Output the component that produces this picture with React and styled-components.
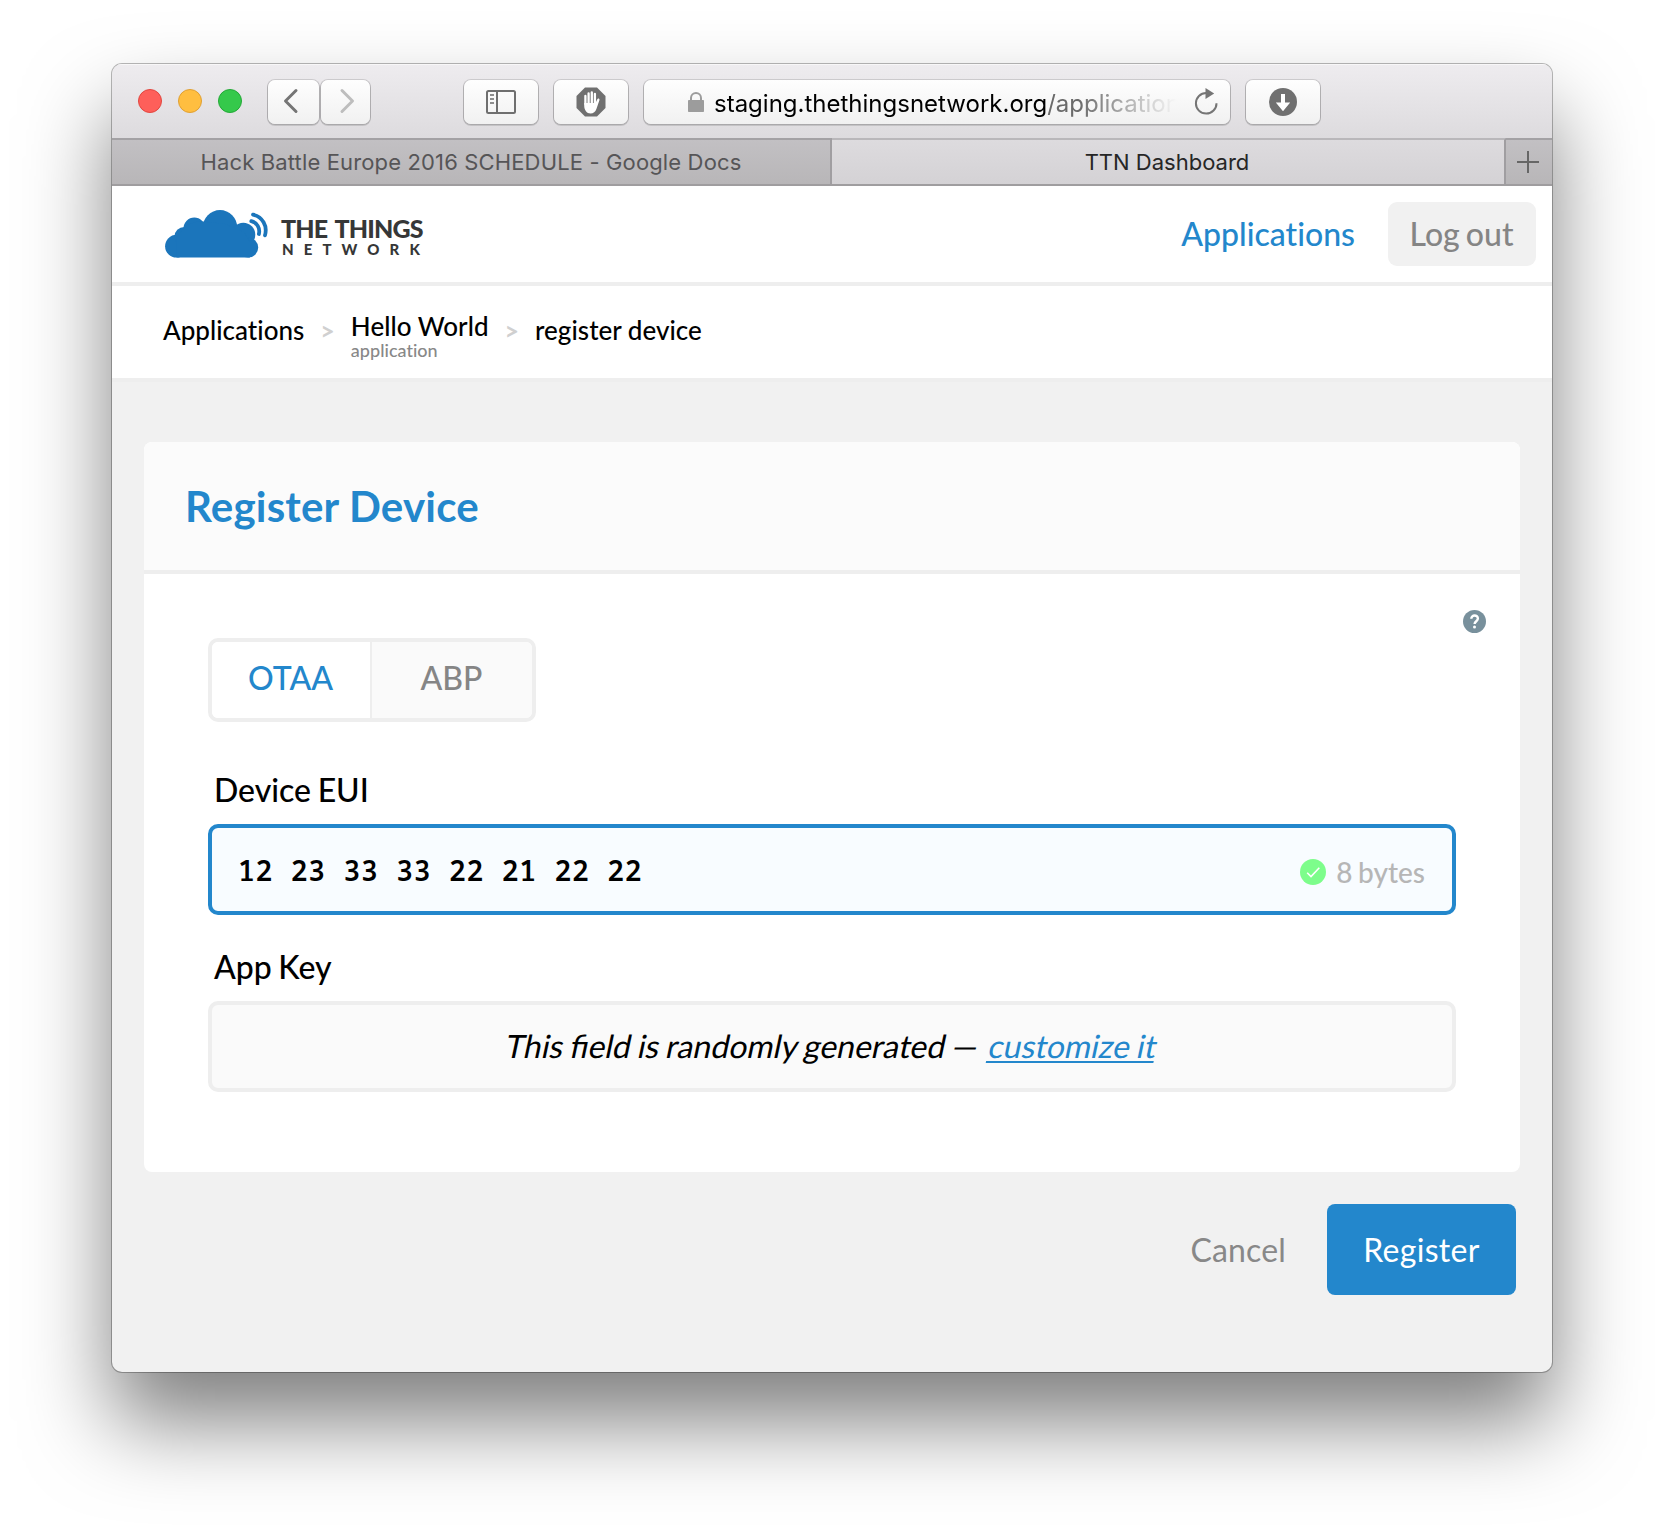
import React from "react";
import styled, { createGlobalStyle } from "styled-components";

const blue = "#2387cc";
const line = "#eeeeee";

const GlobalStyle = createGlobalStyle`
  * { box-sizing: border-box; }
  body {
    margin: 0;
    background: #fff;
    font-family: Lato, "Open Sans", sans-serif;
    font-variant-ligatures: no-common-ligatures;
  }
`;

const Desktop = styled.div`
  height: 1532px;
  padding: 64px 112px 160px;
  overflow: hidden;
`;

const Window = styled.div`
  height: 1308px;
  display: flex;
  flex-direction: column;
  border-radius: 10px;
  overflow: hidden;
  background: #f1f1f1;
  box-shadow: 0 0 0 1px rgba(0, 0, 0, 0.27), 0 50px 86px rgba(0, 0, 0, 0.5);
`;

/* Browser chrome */

const Toolbar = styled.div`
  height: 74px;
  flex: none;
  display: flex;
  align-items: center;
  padding: 2px 0 0 26px;
  background: linear-gradient(#eeecef, #dddbde);
  box-shadow: inset 0 1px 0 #f8f7f8;
`;

const Lights = styled.div`
  display: flex;
  gap: 16px;
  margin-right: 26px;
  padding-bottom: 2px;
`;

const Light = styled.span`
  width: 24px;
  height: 24px;
  border-radius: 50%;
  background: ${(p) => p.$fill};
  border: 1px solid ${(p) => p.$edge};
`;

const ToolButton = styled.button`
  width: ${(p) => p.$width}px;
  height: 44px;
  margin: 0 0 0 ${(p) => p.$gap || 0}px;
  padding: ${(p) => p.$pad || 0};
  display: flex;
  align-items: center;
  justify-content: center;
  border: 0;
  border-radius: 7px;
  background: linear-gradient(#fefefe, #f1f1f1);
  box-shadow: 0 0 0 1px rgba(0, 0, 0, 0.13), 0 1px 0 1px rgba(0, 0, 0, 0.12);
`;

const AddressBar = styled.div`
  width: 586px;
  height: 44px;
  margin: 0 16px;
  padding: 0 12px 0 44px;
  display: flex;
  align-items: center;
  border-radius: 7px;
  background: linear-gradient(#fefefe, #f1f1f1);
  box-shadow: 0 0 0 1px rgba(0, 0, 0, 0.13), 0 1px 0 1px rgba(0, 0, 0, 0.12);
`;

const Address = styled.div`
  width: 462px;
  margin-left: 10px;
  padding-top: 3px;
  overflow: hidden;
  white-space: nowrap;
  font: 400 24px/40px Inter, sans-serif;
  color: #000;
  mask-image: linear-gradient(90deg, #000 365px, transparent 462px);
`;

const AddressPath = styled.span`
  color: #6a6a6a;
`;

const ReloadIcon = styled.svg`
  margin-left: auto;
  flex: none;
`;

const TabBar = styled.div`
  height: 48px;
  flex: none;
  display: flex;
  border-bottom: 2px solid #9f9d9f;
`;

const Tab = styled.div`
  width: ${(p) => p.$width}px;
  display: flex;
  align-items: center;
  justify-content: center;
  padding-right: ${(p) => (p.$active || p.$last ? 2 : 0)}px;
  font: 400 22px/26px Inter, sans-serif;
  letter-spacing: ${(p) => p.$tracking || 0}px;
  color: ${(p) => (p.$active ? "#262626" : "#565557")};
  background: ${(p) =>
    p.$active ? "linear-gradient(#dddbde, #d4d2d5)" : "linear-gradient(#c2c0c3, #b8b6b8)"};
  border-top: 2px solid ${(p) => (p.$active ? "#b9b7ba" : "#a3a1a4")};
  border-right: ${(p) => (p.$last ? 0 : 2)}px solid #a09ea1;
`;

/* Site header */

const SiteHeader = styled.header`
  height: 100px;
  flex: none;
  display: flex;
  align-items: center;
  padding: 0 16px 0 53px;
  background: #fff;
  border-bottom: 4px solid ${line};
`;

const LogoText = styled.div`
  margin-left: 13px;
  padding-top: 4px;
  color: #363737;
  white-space: nowrap;
`;

const LogoName = styled.div`
  font-size: 25px;
  line-height: 24px;
  font-weight: 900;
  letter-spacing: -0.85px;
  word-spacing: 3px;
`;

const LogoSub = styled.div`
  margin-top: 1px;
  padding-left: 1px;
  font-size: 15px;
  line-height: 16px;
  font-weight: 900;
  letter-spacing: 10.1px;
`;

const NavLink = styled.a`
  margin-left: auto;
  font-size: 32px;
  font-weight: 500;
  line-height: 40px;
  color: ${blue};
`;

const LogoutButton = styled.button`
  width: 148px;
  height: 64px;
  margin-left: 33px;
  padding: 0 1px 0 0;
  border: 0;
  border-radius: 9px;
  background: #f1f1f1;
  color: #858585;
  font: 500 32px/40px Lato, sans-serif;
  word-spacing: -2px;
`;

const Breadcrumbs = styled.nav`
  height: 96px;
  flex: none;
  display: flex;
  align-items: center;
  gap: 16px;
  padding: 0 0 4px 51px;
  background: #fff;
  border-bottom: 4px solid ${line};
`;

const Crumb = styled.div`
  font-size: 26px;
  line-height: 26px;
  font-weight: 500;
  color: #000;
  letter-spacing: 0.02px;
  padding-top: ${(p) => (p.$stacked ? 11 : 0)}px;
`;

const CrumbKind = styled.div`
  margin-top: 2px;
  font-size: 18px;
  line-height: 18px;
  color: #888;
`;

const CrumbArrow = styled.span`
  font-size: 25px;
  line-height: 26px;
  font-weight: 700;
  color: #d0d0d0;
`;

/* Register form */

const Main = styled.main`
  flex: 1;
  padding: 60px 32px 0;
`;

const Card = styled.section`
  border-radius: 8px;
  overflow: hidden;
  background: #fff;
`;

const CardHeader = styled.div`
  height: 132px;
  display: flex;
  align-items: center;
  padding-left: 41px;
  background: #fbfbfb;
  border-bottom: 4px solid ${line};
`;

const Title = styled.h1`
  margin: 0;
  font-size: 42px;
  line-height: 50px;
  font-weight: 700;
  letter-spacing: 0.2px;
  color: ${blue};
`;

const CardBody = styled.div`
  padding: 36px 64px 80px;
`;

const ModeRow = styled.div`
  display: flex;
  justify-content: space-between;
  align-items: flex-start;
  margin: 0 -30px 47px 0;
`;

const Segmented = styled.div`
  width: 328px;
  height: 84px;
  margin-top: 28px;
  display: flex;
  border: 4px solid ${line};
  border-radius: 10px;
  overflow: hidden;
`;

const Segment = styled.button`
  width: ${(p) => (p.$active ? 158 : 162)}px;
  padding: 0 1px 5px 0;
  border: 0;
  border-left: ${(p) => (p.$active ? 0 : 2)}px solid ${line};
  background: ${(p) => (p.$active ? "#fff" : "#fafafa")};
  color: ${(p) => (p.$active ? blue : "#858585")};
  font: 500 32px/40px Lato, sans-serif;
`;

const Label = styled.label`
  display: block;
  padding-left: 6px;
  margin: ${(p) => (p.$spaced ? "32px 0 14px" : "48px 0 14px")};
  font-size: 32px;
  line-height: 40px;
  font-weight: 500;
  word-spacing: -1.5px;
  color: #000;
`;

const Field = styled.div`
  height: 91px;
  display: flex;
  align-items: center;
  justify-content: ${(p) => (p.$focused ? "space-between" : "center")};
  padding: 0 27px 0 26px;
  border: 4px solid ${(p) => (p.$focused ? blue : line)};
  border-radius: 10px;
  background: ${(p) => (p.$focused ? "#f8fcff" : "#fafafa")};
`;

const HexValue = styled.span`
  font: 600 28px/40px "Noto Sans Mono", "DejaVu Sans Mono", monospace;
  letter-spacing: 0.78px;
  color: #000;
  white-space: pre;
`;

const ByteCount = styled.span`
  display: flex;
  align-items: center;
  gap: 10px;
  padding-top: 4px;
  font-size: 28px;
  line-height: 34px;
  font-weight: 500;
  word-spacing: -1.5px;
  color: #b6b6b6;
`;

const Generated = styled.span`
  display: inline-block;
  padding-bottom: 2px;
  transform: skewX(-12deg);
  font-size: 32px;
  line-height: 40px;
  font-variant-ligatures: common-ligatures;
  word-spacing: -1.3px;
  color: #000;
`;

const CustomizeLink = styled.a`
  margin-left: 4px;
  color: ${blue};
  text-decoration: underline;
  text-decoration-thickness: 2px;
  text-underline-offset: 3px;
  text-decoration-skip-ink: none;
`;

const Actions = styled.div`
  margin-top: 32px;
  padding-right: 4px;
  display: flex;
  align-items: center;
  justify-content: flex-end;
  gap: 41px;
`;

const CancelLink = styled.a`
  font-size: 32px;
  line-height: 40px;
  letter-spacing: 0.15px;
  color: #888;
`;

const RegisterButton = styled.button`
  width: 189px;
  height: 91px;
  padding: 0;
  border: 0;
  border-radius: 8px;
  background: ${blue};
  color: #fff;
  font: 400 32px/40px Lato, sans-serif;
  letter-spacing: 0.3px;
`;

const Chevron = ({ color, flip }) => (
  <svg width="16" height="26" viewBox="0 0 16 26" fill="none" stroke={color} strokeWidth="3" strokeLinecap="round" strokeLinejoin="round">
    <path d={flip ? "M3 2.5 13.5 13 3 23.5" : "M13 2.5 2.5 13 13 23.5"} />
  </svg>
);

const SidebarIcon = () => (
  <svg width="30" height="24" viewBox="0 0 30 24" fill="none" stroke="#6f6f6f" strokeWidth="2">
    <rect x="1" y="1" width="28" height="22" rx="1.5" />
    <path d="M11 1v22" />
    <path d="M4 5h4M4 9h4M4 13h4" stroke="#8d8d8d" />
  </svg>
);

const StopHandIcon = () => (
  <svg width="30" height="30" viewBox="0 0 30 30">
    <path d="M9 .5h12L29.500 9v12L21 29.500H9L.5 21V9z" fill="#707070" />
    <path d="M8.200 14v4.500c0 4.700 2.600 8 6.300 8 3 0 4.800-1.800 5.900-4.600l3-8.600c.5-1.700-1.500-2.400-2.200-.9L19.500 16H8.200z" fill="#fff" />
    <path d="M9.400 9v8M12.600 6.500V17M15.800 5.300V17M18.900 7v10" stroke="#fff" strokeWidth="2.300" strokeLinecap="round" />
  </svg>
);

const LockIcon = () => (
  <svg width="16" height="20" viewBox="0 0 16 20">
    <rect y="8" width="16" height="12" rx=".8" fill="#9c9c9c" />
    <path d="M3 9V6a5 5 0 0 1 10 0v3" fill="none" stroke="#9c9c9c" strokeWidth="2" />
  </svg>
);

const Reload = () => (
  <ReloadIcon width="24" height="28" viewBox="0 0 24 28">
    <path d="M22.500 15.200A10.300 10.300 0 1 1 12.300 5" fill="none" stroke="#757575" strokeWidth="2" />
    <path d="M11.500 0 20.200 5.500 11.500 11z" fill="#757575" />
  </ReloadIcon>
);

const DownloadIcon = () => (
  <svg width="28" height="28" viewBox="0 0 28 28">
    <circle cx="14" cy="14" r="14" fill="#707070" />
    <path d="M12 6h4v8.500h5.200L14 23.200 6.800 14.500H12z" fill="#fff" />
  </svg>
);

const PlusIcon = () => (
  <svg width="22" height="22" viewBox="0 0 22 22" stroke="#666" strokeWidth="2">
    <path d="M11 0v22M0 11h22" />
  </svg>
);

const CloudLogo = () => (
  <svg width="103" height="48" viewBox="0 0 103 48">
    <g fill="#1b75bb">
      <circle cx="11.500" cy="36.200" r="11.400" />
      <circle cx="19.300" cy="26.800" r="9.900" />
      <circle cx="29.300" cy="18.300" r="10.800" />
      <circle cx="55" cy="17.300" r="17.200" />
      <circle cx="78.300" cy="24.800" r="12" />
      <circle cx="83.200" cy="37.600" r="10" />
      <path d="M11.500 27 22 15l12-4 26 3 19 8 6 10v15.600H11.500z" />
    </g>
    <g fill="none" stroke="#1b75bb" strokeWidth="3.800" strokeLinecap="round">
      <path d="M86.300 11.200C92 12.600 95.300 18 93.900 24" />
      <path d="M88 4.600C97.500 7 102.700 15.500 100 25.300" />
    </g>
  </svg>
);

const HelpIcon = () => (
  <svg width="23" height="23" viewBox="0 0 23 23">
    <circle cx="11.500" cy="11.500" r="11.500" fill="#78909c" />
    <path d="M8.300 8.700C8.300 4.400 14.900 4.500 14.900 8.600c0 2.600-3.300 2.700-3.300 5.400" fill="none" stroke="#fff" strokeWidth="2.400" />
    <circle cx="11.500" cy="17" r="1.500" fill="#fff" />
  </svg>
);

const CheckIcon = () => (
  <svg width="26" height="26" viewBox="0 0 26 26">
    <circle cx="13" cy="13" r="13" fill="#7dfd8b" />
    <path d="M7.200 13.800 11 17.500 19.300 8.800" fill="none" stroke="#fff" strokeWidth="1.600" />
  </svg>
);

export default function App() {
  return (
    <Desktop>
      <GlobalStyle />
      <Window>
        <Toolbar>
          <Lights>
            <Light $fill="#fe5f5a" $edge="#e2463f" />
            <Light $fill="#ffbe40" $edge="#e0a033" />
            <Light $fill="#35c94b" $edge="#24a937" />
          </Lights>
          <ToolButton $width={51} $pad="0 5px 2px 0"><Chevron color="#757575" /></ToolButton>
          <ToolButton $width={49} $gap={2} $pad="0 0 2px 2px"><Chevron color="#bdbdbd" flip /></ToolButton>
          <ToolButton $width={74} $gap={94}><SidebarIcon /></ToolButton>
          <ToolButton $width={74} $gap={16}><StopHandIcon /></ToolButton>
          <AddressBar>
            <LockIcon />
            <Address>
              staging.thethingsnetwork.org<AddressPath>/applications</AddressPath>
            </Address>
            <Reload />
          </AddressBar>
          <ToolButton $width={74}><DownloadIcon /></ToolButton>
        </Toolbar>
        <TabBar>
          <Tab $width={720} $tracking={0.14}>Hack Battle Europe 2016 SCHEDULE - Google Docs</Tab>
          <Tab $width={674} $active>TTN Dashboard</Tab>
          <Tab $width={46} $last><PlusIcon /></Tab>
        </TabBar>
        <SiteHeader>
          <CloudLogo />
          <LogoText>
            <LogoName>THE THINGS</LogoName>
            <LogoSub>NETWORK</LogoSub>
          </LogoText>
          <NavLink>Applications</NavLink>
          <LogoutButton>Log out</LogoutButton>
        </SiteHeader>
        <Breadcrumbs>
          <Crumb>Applications</Crumb>
          <CrumbArrow>&gt;</CrumbArrow>
          <Crumb $stacked>
            Hello World
            <CrumbKind>application</CrumbKind>
          </Crumb>
          <CrumbArrow>&gt;</CrumbArrow>
          <Crumb>register device</Crumb>
        </Breadcrumbs>
        <Main>
          <Card>
            <CardHeader>
              <Title>Register Device</Title>
            </CardHeader>
            <CardBody>
              <ModeRow>
                <Segmented>
                  <Segment $active>OTAA</Segment>
                  <Segment>ABP</Segment>
                </Segmented>
                <HelpIcon />
              </ModeRow>
              <Label>Device EUI</Label>
              <Field $focused>
                <HexValue>12 23 33 33 22 21 22 22</HexValue>
                <ByteCount>
                  <CheckIcon />
                  8 bytes
                </ByteCount>
              </Field>
              <Label $spaced>App Key</Label>
              <Field>
                <Generated>
                  This field is randomly generated — <CustomizeLink>customize it</CustomizeLink>
                </Generated>
              </Field>
            </CardBody>
          </Card>
          <Actions>
            <CancelLink>Cancel</CancelLink>
            <RegisterButton>Register</RegisterButton>
          </Actions>
        </Main>
      </Window>
    </Desktop>
  );
}
